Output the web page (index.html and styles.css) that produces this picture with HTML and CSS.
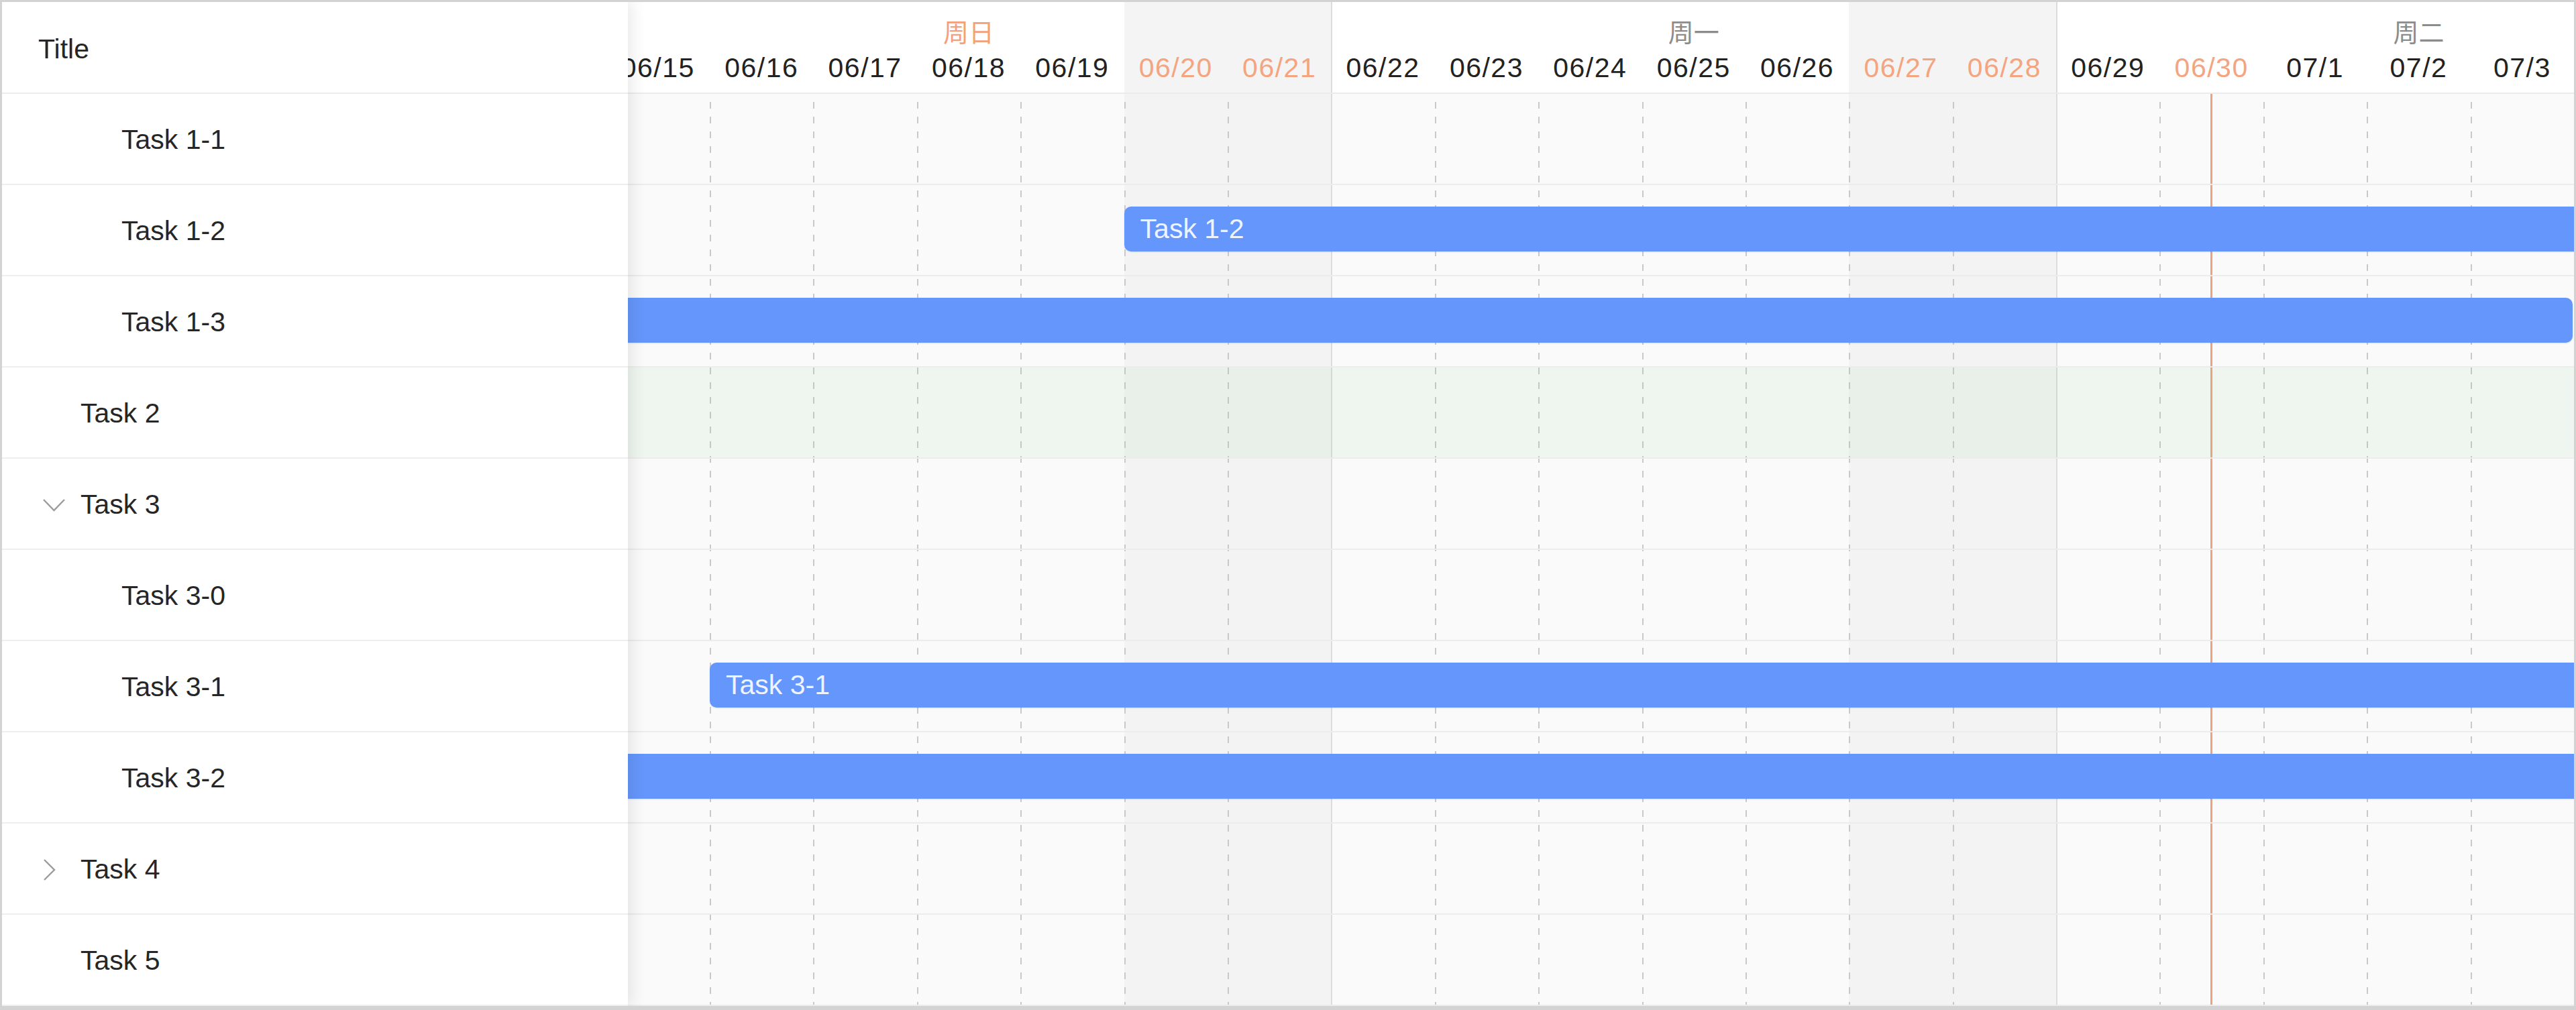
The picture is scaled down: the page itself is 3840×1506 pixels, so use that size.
FILE: index.html
```html
<!DOCTYPE html>
<html lang="zh">
<head>
<meta charset="utf-8">
<title>Gantt</title>
<link rel="stylesheet" href="styles.css">
</head>
<body>
<div class="gantt">
  <aside class="sidebar">
    <div class="side-head">Title</div>
    <div class="side-row lvl1"><span class="caret"></span><span class="name">Task 1-1</span></div>
    <div class="side-row lvl1"><span class="caret"></span><span class="name">Task 1-2</span></div>
    <div class="side-row lvl1"><span class="caret"></span><span class="name">Task 1-3</span></div>
    <div class="side-row"><span class="caret"></span><span class="name">Task 2</span></div>
    <div class="side-row"><span class="caret"><svg width="35" height="20" viewBox="0 0 35 20"><polyline points="2,2 17.5,18 33,2" fill="none" stroke="#9b9b9b" stroke-width="2.4"/></svg></span><span class="name">Task 3</span></div>
    <div class="side-row lvl1"><span class="caret"></span><span class="name">Task 3-0</span></div>
    <div class="side-row lvl1"><span class="caret"></span><span class="name">Task 3-1</span></div>
    <div class="side-row lvl1"><span class="caret"></span><span class="name">Task 3-2</span></div>
    <div class="side-row"><span class="caret"><svg width="20" height="34" viewBox="0 0 20 34"><polyline points="3,2 18,17 3,32" fill="none" stroke="#9b9b9b" stroke-width="2.4"/></svg></span><span class="name">Task 4</span></div>
    <div class="side-row"><span class="caret"></span><span class="name">Task 5</span></div>
  </aside>

  <section class="timeline">
    <div class="canvas">
      <div class="tl-head">
        <div class="hcols">
          <div class="hcol wk"></div><div class="hcol"></div><div class="hcol"></div><div class="hcol"></div><div class="hcol"></div><div class="hcol we"></div><div class="hcol we"></div>
          <div class="hcol wk"></div><div class="hcol"></div><div class="hcol"></div><div class="hcol"></div><div class="hcol"></div><div class="hcol we"></div><div class="hcol we"></div>
          <div class="hcol wk"></div><div class="hcol"></div><div class="hcol"></div><div class="hcol"></div><div class="hcol"></div><div class="hcol we"></div><div class="hcol we"></div>
        </div>
        <div class="hlabels">
          <div class="weeks">
            <div class="week hl">周日</div>
            <div class="week">周一</div>
            <div class="week">周二</div>
          </div>
          <div class="dates">
            <div class="date">06/15</div><div class="date">06/16</div><div class="date">06/17</div><div class="date">06/18</div><div class="date">06/19</div><div class="date hl">06/20</div><div class="date hl">06/21</div>
            <div class="date">06/22</div><div class="date">06/23</div><div class="date">06/24</div><div class="date">06/25</div><div class="date">06/26</div><div class="date hl">06/27</div><div class="date hl">06/28</div>
            <div class="date">06/29</div><div class="date hl">06/30</div><div class="date">07/1</div><div class="date">07/2</div><div class="date">07/3</div><div class="date"></div><div class="date"></div>
          </div>
        </div>
      </div>

      <div class="tl-body">
        <div class="bcols">
          <div class="bcol wk"></div><div class="bcol"></div><div class="bcol"></div><div class="bcol"></div><div class="bcol"></div><div class="bcol we"></div><div class="bcol we"></div>
          <div class="bcol wk"></div><div class="bcol"></div><div class="bcol"></div><div class="bcol"></div><div class="bcol"></div><div class="bcol we"></div><div class="bcol we"></div>
          <div class="bcol wk"></div><div class="bcol today"></div><div class="bcol"></div><div class="bcol"></div><div class="bcol"></div><div class="bcol we"></div><div class="bcol we"></div>
        </div>
        <div class="rows">
          <div class="row"></div>
          <div class="row"><div class="bar" style="margin-left:772px;width:2470.4px">Task 1-2</div></div>
          <div class="row"><div class="bar" style="margin-left:0;width:2931px"></div></div>
          <div class="row sel"></div>
          <div class="row"></div>
          <div class="row"></div>
          <div class="row"><div class="bar" style="margin-left:154.4px;width:3088px">Task 3-1</div></div>
          <div class="row"><div class="bar" style="margin-left:0;width:3242.4px"></div></div>
          <div class="row"></div>
          <div class="row"></div>
        </div>
      </div>
    </div>
  </section>
</div>
</body>
</html>
```

FILE: styles.css
```css
:root {
  --col: 154.4px;
}

* {
  box-sizing: border-box;
}

html,
body {
  margin: 0;
  padding: 0;
  background: #ffffff;
}

body {
  font-family: "Liberation Sans", Arial, "Noto Sans CJK SC", sans-serif;
  color: #262626;
}

.gantt {
  display: flex;
  width: 3840px;
  height: 1506px;
  border: 3px solid #d3d3d3;
  border-bottom-width: 6px;
  overflow: hidden;
  background: #ffffff;
}

/* ---------- sidebar ---------- */
.sidebar {
  flex: none;
  width: 933px;
  display: flex;
  flex-direction: column;
  background: #ffffff;
  position: relative;
  z-index: 2;
  box-shadow: 6px 0 22px rgba(0, 0, 0, 0.09);
}

.side-head {
  flex: none;
  height: 137px;
  display: flex;
  align-items: center;
  padding-left: 54px;
  padding-top: 5px;
  font-size: 41px;
  border-bottom: 2px solid #ececec;
}

.side-row {
  flex: none;
  height: 136px;
  display: flex;
  align-items: center;
  gap: 22px;
  padding-left: 60px;
  padding-top: 3px;
  font-size: 41px;
  border-bottom: 2px solid #efefef;
}

.side-row.lvl1 {
  padding-left: 121px;
}

.caret {
  flex: none;
  width: 35px;
  height: 36px;
  display: flex;
  align-items: center;
  justify-content: flex-start;
}

.caret svg {
  display: block;
}

/* ---------- timeline ---------- */
.timeline {
  flex: 1;
  overflow: hidden;
  position: relative;
  z-index: 1;
}

.canvas {
  width: calc(var(--col) * 21);
  margin-left: -32.4px;
}

.tl-head {
  height: 137px;
  display: grid;
  border-bottom: 2px solid #ebebeb;
}

.tl-head > *,
.tl-body > * {
  grid-area: 1 / 1;
}

.hcols,
.bcols {
  display: flex;
}

.hcol {
  flex: none;
  width: var(--col);
  background-color: #ffffff;
}

.hcol.we {
  background-color: #f4f4f4;
}

.hcol.wk {
  background-image: linear-gradient(#dcdcdc, #dcdcdc);
  background-size: 2px 100%;
  background-repeat: no-repeat;
}

.hlabels {
  display: flex;
  flex-direction: column;
  padding-top: 13px;
}

.weeks {
  display: flex;
  height: 60px;
}

.week {
  flex: none;
  width: calc(var(--col) * 7);
  text-align: center;
  line-height: 60px;
  font-size: 38px;
  color: #8c8c8c;
  font-family: "Noto Sans CJK SC", sans-serif;
}

.week.hl {
  color: #f3a07b;
}

.dates {
  display: flex;
  height: 50px;
}

.date {
  flex: none;
  width: var(--col);
  text-align: center;
  line-height: 50px;
  font-size: 41px;
  letter-spacing: 1.5px;
  color: #222222;
}

.date.hl {
  color: #f4a47f;
}

.tl-body {
  display: grid;
  height: 1360px;
}

.bcol {
  flex: none;
  width: var(--col);
  display: flex;
  justify-content: center;
  background-color: #fafafa;
  background-image: repeating-linear-gradient(to bottom, transparent 0 12px, #c9c9c9 12px 22px);
  background-size: 2px 100%;
  background-repeat: no-repeat;
}

.bcol.we {
  background-color: #f3f3f3;
}

.bcol.wk {
  background-image: linear-gradient(#dcdcdc, #dcdcdc);
}

.bcol.today::after {
  content: "";
  width: 3px;
  background: #f1a27d;
}

.rows {
  display: flex;
  flex-direction: column;
}

.row {
  flex: none;
  height: 136px;
  display: flex;
  align-items: flex-start;
  border-bottom: 2px solid #ececec;
}

.row.sel {
  background: rgba(110, 200, 110, 0.08);
}

.bar {
  flex: none;
  margin-top: 32px;
  height: 67px;
  padding-left: 24px;
  border-radius: 10px;
  background: #6596fb;
  color: #eef4ff;
  font-size: 41px;
  line-height: 67px;
  white-space: nowrap;
  overflow: hidden;
  box-shadow: 0 1px 2px rgba(40, 80, 160, 0.15);
}
```
